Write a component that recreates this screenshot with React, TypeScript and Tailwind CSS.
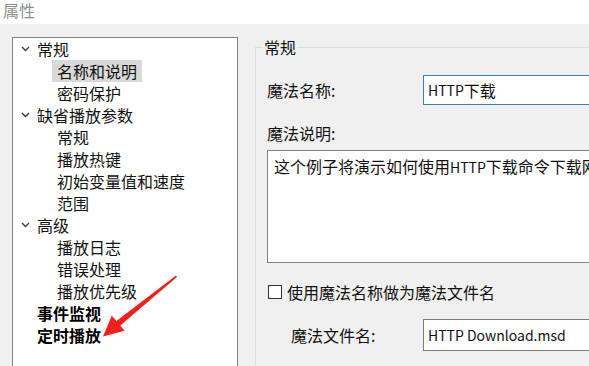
import React from "react";

const font = { fontFamily: '"Microsoft YaHei", "Noto Sans CJK SC", sans-serif' };

type Node = { label: string; level: 0 | 1; open?: boolean; bold?: boolean; selected?: boolean };

const tree: Node[] = [
  { label: "常规", level: 0, open: true },
  { label: "名称和说明", level: 1, selected: true },
  { label: "密码保护", level: 1 },
  { label: "缺省播放参数", level: 0, open: true },
  { label: "常规", level: 1 },
  { label: "播放热键", level: 1 },
  { label: "初始变量值和速度", level: 1 },
  { label: "范围", level: 1 },
  { label: "高级", level: 0, open: true },
  { label: "播放日志", level: 1 },
  { label: "错误处理", level: 1 },
  { label: "播放优先级", level: 1 },
  { label: "事件监视", level: 0, bold: true },
  { label: "定时播放", level: 0, bold: true },
];

function Chevron() {
  return (
    <svg width="9" height="6" viewBox="0 0 9 6" className="shrink-0">
      <polyline points="1,1 4.5,4.5 8,1" fill="none" stroke="#333" strokeWidth="1.3" />
    </svg>
  );
}

function TreeRow({ node }: { node: Node }) {
  if (node.level === 0) {
    return (
      <div className="flex h-[22px] items-center">
        <div className="flex w-[24px] justify-start pl-[8px]">{node.open && <Chevron />}</div>
        <span className={node.bold ? "font-bold text-black" : "text-[#111]"}>{node.label}</span>
      </div>
    );
  }
  return (
    <div className="flex h-[22px] items-center pl-[39px]">
      <span className={`px-[5px] leading-[22px] text-[#111] ${node.selected ? "bg-[#d9d9d9]" : ""}`}>
        {node.label}
      </span>
    </div>
  );
}

function RedArrow() {
  return (
    <svg className="pointer-events-none absolute inset-0" width="589" height="366">
      <polygon
        points="176,275.5 177,277 120.3,325.6 124.6,330.8 103,336.5 111.8,315.8 116.4,321"
        fill="#f0201a"
      />
    </svg>
  );
}

export default function App() {
  return (
    <div
      className="relative flex h-[366px] w-[589px] flex-col overflow-hidden bg-[#f0f0f0] text-[16px] leading-[22px]"
      style={font}
    >
      <div className="h-[24px] shrink-0 bg-white pl-[3px] leading-[21px] text-[#8f8f8f]">属性</div>

      <div className="flex flex-1 items-start pt-[12px]">
        {/* tree */}
        <div className="ml-[12px] mt-[1px] h-[360px] w-[226px] shrink-0 border border-[#828282] bg-white">
          {tree.map((n, i) => (
            <TreeRow key={i} node={n} />
          ))}
        </div>

        {/* group box */}
        <fieldset className="ml-[17px] h-[400px] w-[420px] shrink-0 border-l border-t border-[#dcdcdc] pl-[11px]">
          <legend className="-ml-[4px] px-[1px] leading-[22px] text-[#111]">常规</legend>

          <div className="mt-[17px] flex items-center">
            <span className="w-[156px] shrink-0 text-[#111]">魔法名称:</span>
            <div className="flex h-[30px] flex-1 items-center border border-[#3c7fb1] bg-white pl-[4px] text-[#111]">
              <span className="text-[14px]">HTTP</span>下载
            </div>
          </div>

          <div className="mt-[17px] text-[#111]">魔法说明:</div>
          <div className="mt-[6px] h-[113px] w-[400px] whitespace-nowrap border border-[#828282] bg-white px-[6px] pt-[4px] text-[#111]">
            这个例子将演示如何使用<span className="text-[14px]">HTTP</span>下载命令下载网页文件。
          </div>

          <label className="mt-[18px] flex items-center">
            <span className="ml-[1px] h-[14px] w-[14px] shrink-0 border border-[#333] bg-white" />
            <span className="ml-[5px] text-[#111]">使用魔法名称做为魔法文件名</span>
          </label>

          <div className="mt-[16px] flex items-center">
            <span className="w-[156px] shrink-0 pl-[24px] text-[#111]">魔法文件名:</span>
            <div className="flex h-[32px] flex-1 items-center border border-[#7a7a7a] bg-white pl-[4px] text-[14px] text-[#111]">
              HTTP Download.msd
            </div>
          </div>
        </fieldset>
      </div>

      <RedArrow />
    </div>
  );
}
